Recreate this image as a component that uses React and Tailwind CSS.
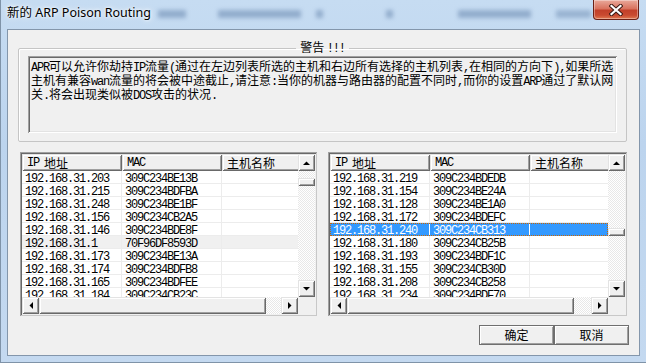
import React from 'react';

const leftRows = [
  ['192.168.31.203', '309C234BE13B'],
  ['192.168.31.215', '309C234BDFBA'],
  ['192.168.31.248', '309C234BE1BF'],
  ['192.168.31.156', '309C234CB2A5'],
  ['192.168.31.146', '309C234BDE8F'],
  ['192.168.31.1', '70F96DF8593D'],
  ['192.168.31.173', '309C234BE13A'],
  ['192.168.31.174', '309C234BDFB8'],
  ['192.168.31.165', '309C234BDFEE'],
  ['192.168.31.184', '309C234CB23C'],
];

const rightRows = [
  ['192.168.31.219', '309C234BDEDB'],
  ['192.168.31.154', '309C234BE24A'],
  ['192.168.31.128', '309C234BE1A0'],
  ['192.168.31.172', '309C234BDEFC'],
  ['192.168.31.240', '309C234CB313'],
  ['192.168.31.180', '309C234CB25B'],
  ['192.168.31.193', '309C234BDF1C'],
  ['192.168.31.155', '309C234CB30D'],
  ['192.168.31.208', '309C234CB258'],
  ['192.168.31.234', '309C234BDF70'],
];

// classic win32 bevels
const raised =
  'bg-[#f0f0f0] shadow-[inset_1px_1px_0_#e3e3e3,inset_-1px_-1px_0_#696969,inset_2px_2px_0_#fff,inset_-2px_-2px_0_#a0a0a0]';
const checker = 'bg-[repeating-conic-gradient(#e8e8e8_0_25%,#ffffff_0_50%)] bg-[length:2px_2px]';
const mono = "[font-family:'Liberation_Mono',monospace] tracking-[-1.2px]";

const M = ({ children }) => <span className={mono}>{children}</span>;

const Arrow = ({ dir }) => {
  const pts = {
    up: '0,4 7,4 3.5,0.5',
    down: '0,0 7,0 3.5,3.5',
    left: '4,0 4,7 0.5,3.5',
    right: '0,0 0,7 3.5,3.5',
  }[dir];
  const vertical = dir === 'up' || dir === 'down';
  return (
    <svg width={vertical ? 7 : 4} height={vertical ? 4 : 7} viewBox={vertical ? '0 0 7 4' : '0 0 4 7'}>
      <polygon points={pts} fill="#000" />
    </svg>
  );
};

const ScrollBtn = ({ dir, className }) => (
  <div className={`${raised} ${className} flex items-center justify-center shrink-0`}>
    <Arrow dir={dir} />
  </div>
);

const HostList = ({ rows, width, selected, grey, thumbTop }) => (
  <div
    className={`${width} h-[164px] p-[2px] flex bg-white shadow-[inset_1px_1px_0_#a0a0a0,inset_-1px_-1px_0_#c8c8c8,inset_2px_2px_0_#696969,inset_-2px_-2px_0_#f0f0f0]`}
  >
    <div className="flex-1 min-w-0 flex flex-col">
      <div className="flex-1 overflow-hidden">
        {/* header */}
        <div className="flex h-[17px]">
          <div className={`${raised} w-[100px] shrink-0 pl-[5px] flex items-center text-[12px] leading-[12px]`}>
            <M>IP </M>
            <span className="ml-[5px]">地址</span>
          </div>
          <div className={`${raised} w-[100px] shrink-0 pl-[5px] flex items-center text-[12px] leading-[12px]`}>
            <M>MAC</M>
          </div>
          <div className={`${raised} w-[100px] shrink-0 pl-[5px] flex items-center text-[12px] leading-[12px]`}>
            主机名称
          </div>
        </div>
        {/* rows */}
        {rows.map(([ip, mac], i) => {
          const isSel = i === selected;
          const isGrey = i === grey;
          const rowCls = isSel
            ? 'bg-[#3399ff] text-white outline-1 outline-dotted outline-[#cc6600] -outline-offset-1'
            : isGrey
              ? 'bg-[#f0f0f0] text-black'
              : 'bg-white text-black';
          const cell = `w-[100px] shrink-0 pl-[3px] h-[13px] border-b border-r ${
            isSel ? 'border-r-white border-b-[#3399ff]' : 'border-[#ececec]'
          } text-[12px] leading-[12px] whitespace-nowrap overflow-hidden`;
          return (
            <div key={ip} className={`flex h-[13px] ${rowCls}`}>
              <div className={cell}>
                <M>{ip}</M>
              </div>
              <div className={cell}>
                <M>{mac}</M>
              </div>
              <div className={cell} />
            </div>
          );
        })}
      </div>
      {/* horizontal scrollbar */}
      <div className="h-[17px] flex shrink-0">
        <ScrollBtn dir="left" className="w-[17px] h-[17px]" />
        <div className={`${raised} w-[227px] h-[17px] shrink-0`} />
        <div className={`flex-1 ${checker}`} />
        <ScrollBtn dir="right" className="w-[17px] h-[17px]" />
      </div>
    </div>
    {/* vertical scrollbar */}
    <div className="w-[17px] flex flex-col shrink-0">
      <ScrollBtn dir="up" className="w-[17px] h-[17px]" />
      <div className={`flex-1 flex flex-col ${checker}`}>
        <div className={`${raised} ${thumbTop} h-[8px] w-[17px]`} />
      </div>
      <ScrollBtn dir="down" className="w-[17px] h-[17px]" />
      <div className="h-[17px] bg-[#f0f0f0]" />
    </div>
  </div>
);

const CloseButton = () => (
  <div className="w-[46px] h-[20px] rounded-b-[4px] border border-t-0 border-[#6b2016] bg-[linear-gradient(to_bottom,#e9a99b_0%,#d9735f_45%,#c2402a_55%,#c94a30_80%,#e07a52_100%)] shadow-[inset_0_0_0_1px_rgba(255,255,255,0.35)] flex items-center justify-center">
    <svg width="14" height="12" viewBox="0 0 14 12">
      <path d="M2.5 2 L11.5 10 M11.5 2 L2.5 10" stroke="#3b1a14" strokeWidth="4.2" strokeLinecap="square" />
      <path d="M2.5 2 L11.5 10 M11.5 2 L2.5 10" stroke="#ffffff" strokeWidth="2.2" strokeLinecap="square" />
    </svg>
  </div>
);

export default function App() {
  return (
    <div className="w-[646px] h-[363px] overflow-hidden flex flex-col bg-[linear-gradient(to_bottom,#c6dcf2,#bcd4ee_40%,#c4d9f0)] border-l border-b border-[#7f93a8] [font-family:'Noto_Sans_CJK_SC',sans-serif] text-black">
      {/* title bar */}
      <div className="h-[29px] shrink-0 flex items-start relative">
        {/* blurred glass background content */}
        <div className="absolute left-[157px] top-[10px] w-[28px] h-[8px] bg-[#7d9abd] blur-[2px] opacity-70" />
        <div className="absolute left-[217px] top-[10px] w-[83px] h-[8px] bg-[#7d9abd] blur-[2px] opacity-70" />
        <div className="absolute left-[315px] top-[10px] w-[7px] h-[8px] bg-[#7d9abd] blur-[2px] opacity-70" />
        <div className="absolute left-[385px] top-[10px] w-[7px] h-[8px] bg-[#7d9abd] blur-[2px] opacity-70" />
        <div className="absolute left-[457px] top-[10px] w-[73px] h-[8px] bg-[#7d9abd] blur-[2px] opacity-70" />
        <div className="absolute left-[555px] top-[10px] w-[35px] h-[8px] bg-[#7d9abd] blur-[2px] opacity-60" />
        <div className="relative pl-[6px] pt-[5px] text-[12.5px] leading-[16px] [font-family:'Noto_Sans','Noto_Sans_CJK_SC',sans-serif] [text-shadow:0_0_6px_#fff,0_0_3px_#fff]">
          新的 ARP Poison Routing
        </div>
        <div className="relative ml-auto mr-[7px]">
          <CloseButton />
        </div>
      </div>

      {/* client area */}
      <div className="flex-1 mx-[6px] mb-[6px] border border-[#8396ab] bg-[#f0f0f0] flex flex-col">
        <fieldset className="mt-[10px] ml-[10px] mr-[12px] h-[102px] border border-[#c5c5c5] rounded-[2px] px-[9px] pb-[8px] shadow-[inset_1px_1px_0_#fff]">
          <legend className="mx-auto px-[4px] text-[12px] leading-[14px]">
            警告 <M>!!!</M>
          </legend>
          <div className="h-[77px] p-[2px] shadow-[inset_1px_1px_0_#a0a0a0,inset_-1px_-1px_0_#fff,inset_2px_2px_0_#696969,inset_-2px_-2px_0_#e3e3e3] text-[12px] leading-[12px]">
            <div className="pl-[1px] pt-[2px]">
              <div className="whitespace-nowrap">
                <M>APR</M>可以允许你劫持<M>IP</M>流量<M>(</M>通过在左边列表所选的主机和右边所有选择的主机列表<M>,</M>在相同的方向下<M>),</M>如果所选
              </div>
              <div className="whitespace-nowrap">
                主机有兼容<M>wan</M>流量的将会被中途截止<M>,</M>请注意<M>:</M>当你的机器与路由器的配置不同时<M>,</M>而你的设置<M>ARP</M>通过了默认网
              </div>
              <div className="whitespace-nowrap">
                关<M>.</M>将会出现类似被<M>DOS</M>攻击的状况<M>.</M>
              </div>
            </div>
          </div>
        </fieldset>

        <div className="mt-[10px] ml-[12px] flex gap-[11px]">
          <HostList rows={leftRows} width="w-[297px]" selected={-1} grey={5} thumbTop="mt-[7px]" />
          <HostList rows={rightRows} width="w-[299px]" selected={4} grey={-1} thumbTop="mt-[57px]" />
        </div>

        <div className="mt-[9px] mr-[10px] flex justify-end">
          <button className="w-[75px] h-[20px] border border-[#6f6f6f] bg-[#f0f0f0] shadow-[inset_1px_1px_0_#fff,inset_-1px_-1px_0_#a0a0a0] text-[12px] leading-[12px]">
            确定
          </button>
          <button className="w-[75px] h-[20px] border border-[#6f6f6f] bg-[#f0f0f0] shadow-[inset_1px_1px_0_#fff,inset_-1px_-1px_0_#a0a0a0] text-[12px] leading-[12px]">
            取消
          </button>
        </div>
      </div>
    </div>
  );
}
